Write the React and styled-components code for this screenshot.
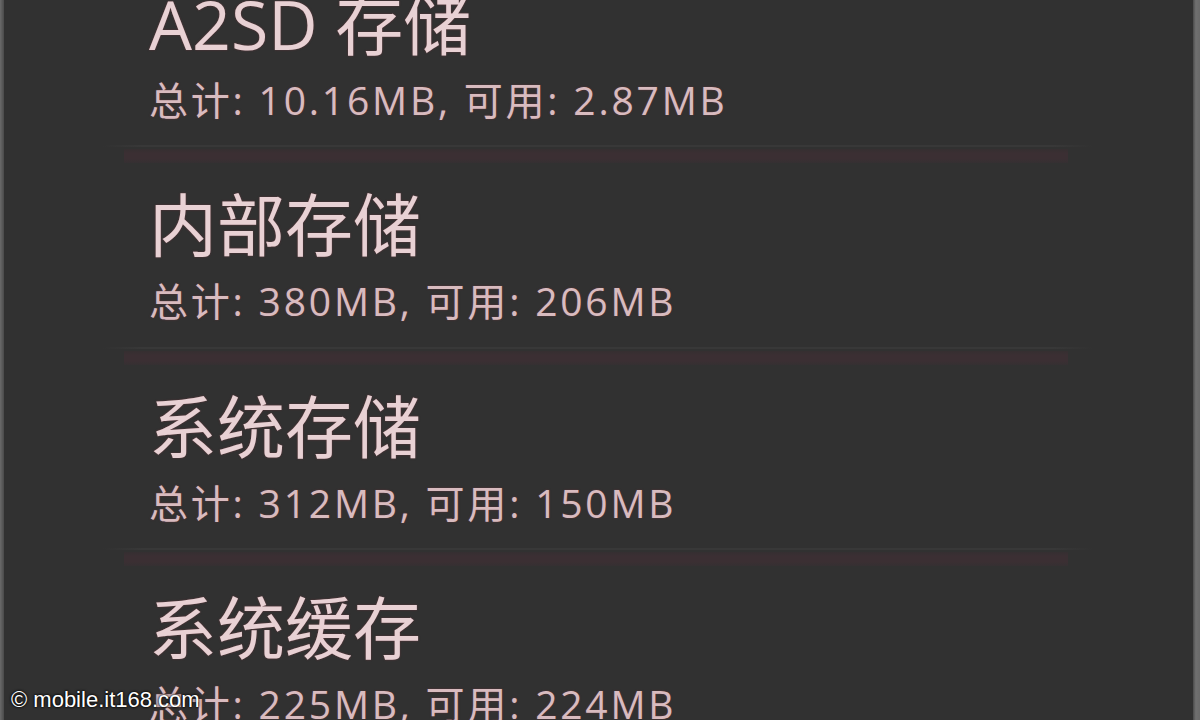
import React from "react";
import styled, { createGlobalStyle } from "styled-components";

const GlobalStyle = createGlobalStyle`
  html, body {
    margin: 0;
    padding: 0;
    background: #313131;
  }
  body {
    font-family: "Open Sans", "Noto Sans CJK SC", sans-serif;
  }
`;

const Screen = styled.div`
  position: relative;
  width: 1200px;
  height: 720px;
  overflow: hidden;
  background: #313131;
  display: flex;
`;

const EdgeLeft = styled.div`
  width: 4px;
  flex-shrink: 0;
  background: linear-gradient(to right, #6a6a6a, #4a4a4a);
`;

const EdgeRight = styled.div`
  width: 7px;
  flex-shrink: 0;
  background: linear-gradient(to right, #4a4a4a, #707070 40%, #6a6a6a);
`;

const List = styled.div`
  flex: 1;
  margin-top: -38.5px;
  display: flex;
  flex-direction: column;
`;

const Item = styled.div`
  flex-shrink: 0;
  padding: 22px 0 20.5px 145px;
  display: flex;
  flex-direction: column;
`;

const Title = styled.div`
  font-family: "Open Sans", "Noto Sans CJK SC", sans-serif;
  font-size: 68px;
  line-height: 80px;
  height: 80px;
  color: #e8d1d4;
  white-space: nowrap;
  text-shadow: 0 0 2px rgba(150, 60, 70, 0.5);
`;

const Sub = styled.div`
  margin-top: 11px;
  font-family: "Open Sans", "Noto Sans CJK SC", sans-serif;
  font-size: 39px;
  letter-spacing: 2.8px;
  line-height: 50px;
  height: 50px;
  color: #d8bbbf;
  white-space: nowrap;
  text-shadow: 0 0 2px rgba(150, 60, 70, 0.5);
`;

const Divider = styled.div`
  flex-shrink: 0;
  height: 18px;
  margin: 0 100px 0 98px;
  display: flex;
  flex-direction: column;
  &::before {
    content: "";
    height: 2px;
    margin-bottom: 2px;
    background: linear-gradient(to right, transparent, #383838 4%, #383838 96%, transparent);
  }
  &::after {
    content: "";
    flex: 1;
    margin: 0 25px 0 22px;
    background: linear-gradient(to bottom, #352f31, #3b2f33 30%, #3b2f33 70%, #353032);
  }
`;

const Watermark = styled.div`
  position: absolute;
  left: 11px;
  bottom: 7px;
  font-family: "Liberation Sans", Arial, sans-serif;
  font-size: 22px;
  color: #ffffff;
  text-shadow: 0 0 3px #000, 0 0 2px #000;
`;

const items = [
  { title: "A2SD 存储", total: "10.16MB", free: "2.87MB" },
  { title: "内部存储", total: "380MB", free: "206MB" },
  { title: "系统存储", total: "312MB", free: "150MB" },
  { title: "系统缓存", total: "225MB", free: "224MB" },
];

export default function App() {
  return (
    <Screen>
      <GlobalStyle />
      <EdgeLeft />
      <List>
        {items.map((it, i) => (
          <React.Fragment key={it.title}>
            <Item>
              <Title>{it.title}</Title>
              <Sub>
                总计: {it.total}, 可用: {it.free}
              </Sub>
            </Item>
            {i < items.length - 1 && <Divider />}
          </React.Fragment>
        ))}
      </List>
      <EdgeRight />
      <Watermark>© mobile.it168.com</Watermark>
    </Screen>
  );
}
